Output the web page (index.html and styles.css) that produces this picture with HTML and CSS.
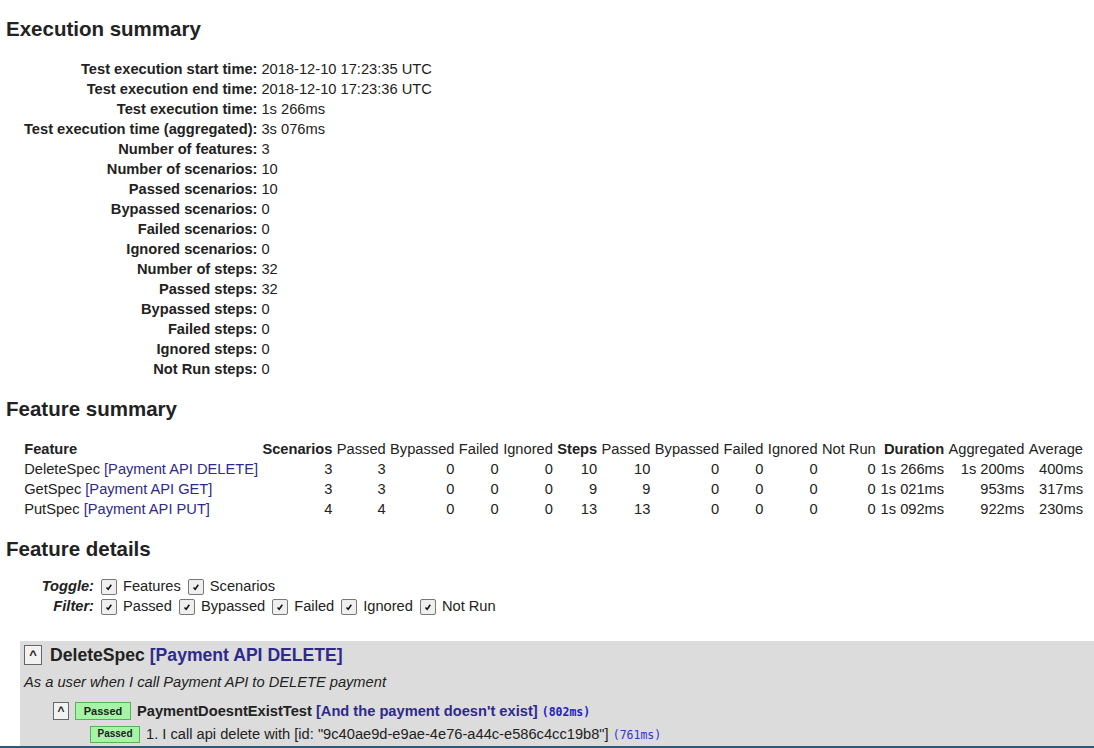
FILE: index.html
```html
<!DOCTYPE html>
<html>
<head>
<meta charset="utf-8">
<link rel="stylesheet" href="styles.css">
</head>
<body>
<h2 class="h">Execution summary</h2>
<table class="summary">
<tr><th>Test execution start time:</th><td>2018-12-10 17:23:35 UTC</td></tr>
<tr><th>Test execution end time:</th><td>2018-12-10 17:23:36 UTC</td></tr>
<tr><th>Test execution time:</th><td>1s 266ms</td></tr>
<tr><th>Test execution time (aggregated):</th><td>3s 076ms</td></tr>
<tr><th>Number of features:</th><td>3</td></tr>
<tr><th>Number of scenarios:</th><td>10</td></tr>
<tr><th>Passed scenarios:</th><td>10</td></tr>
<tr><th>Bypassed scenarios:</th><td>0</td></tr>
<tr><th>Failed scenarios:</th><td>0</td></tr>
<tr><th>Ignored scenarios:</th><td>0</td></tr>
<tr><th>Number of steps:</th><td>32</td></tr>
<tr><th>Passed steps:</th><td>32</td></tr>
<tr><th>Bypassed steps:</th><td>0</td></tr>
<tr><th>Failed steps:</th><td>0</td></tr>
<tr><th>Ignored steps:</th><td>0</td></tr>
<tr><th>Not Run steps:</th><td>0</td></tr>
</table>

<h2 class="h h-gap">Feature summary</h2>
<table class="features">
<thead>
<tr>
<th class="l b">Feature</th>
<th class="b">Scenarios</th><th>Passed</th><th>Bypassed</th><th>Failed</th><th>Ignored</th>
<th class="b">Steps</th><th>Passed</th><th>Bypassed</th><th>Failed</th><th>Ignored</th><th>Not Run</th>
<th class="b dur-col">Duration</th><th>Aggregated</th><th>Average</th>
</tr>
</thead>
<tbody>
<tr><td class="l">DeleteSpec <a class="lnk">[Payment API DELETE]</a></td><td>3</td><td>3</td><td>0</td><td>0</td><td>0</td><td>10</td><td>10</td><td>0</td><td>0</td><td>0</td><td>0</td><td>1s 266ms</td><td>1s 200ms</td><td>400ms</td></tr>
<tr><td class="l">GetSpec <a class="lnk">[Payment API GET]</a></td><td>3</td><td>3</td><td>0</td><td>0</td><td>0</td><td>9</td><td>9</td><td>0</td><td>0</td><td>0</td><td>0</td><td>1s 021ms</td><td>953ms</td><td>317ms</td></tr>
<tr><td class="l">PutSpec <a class="lnk">[Payment API PUT]</a></td><td>4</td><td>4</td><td>0</td><td>0</td><td>0</td><td>13</td><td>13</td><td>0</td><td>0</td><td>0</td><td>0</td><td>1s 092ms</td><td>922ms</td><td>230ms</td></tr>
</tbody>
</table>

<h2 class="h h-gap2">Feature details</h2>
<div class="opts">
  <span class="opt-label">Toggle:</span>
  <div class="opt-list">
    <span class="cb"><svg viewBox="0 0 14 14" width="14" height="14"><path d="M4.5 7.5 L6.2 9.3 L9.3 4.8" fill="none" stroke="#111" stroke-width="1.5"/></svg></span><span class="opt-text">Features</span>
    <span class="cb"><svg viewBox="0 0 14 14" width="14" height="14"><path d="M4.5 7.5 L6.2 9.3 L9.3 4.8" fill="none" stroke="#111" stroke-width="1.5"/></svg></span><span class="opt-text">Scenarios</span>
  </div>
  <span class="opt-label">Filter:</span>
  <div class="opt-list">
    <span class="cb"><svg viewBox="0 0 14 14" width="14" height="14"><path d="M4.5 7.5 L6.2 9.3 L9.3 4.8" fill="none" stroke="#111" stroke-width="1.5"/></svg></span><span class="opt-text">Passed</span>
    <span class="cb"><svg viewBox="0 0 14 14" width="14" height="14"><path d="M4.5 7.5 L6.2 9.3 L9.3 4.8" fill="none" stroke="#111" stroke-width="1.5"/></svg></span><span class="opt-text">Bypassed</span>
    <span class="cb"><svg viewBox="0 0 14 14" width="14" height="14"><path d="M4.5 7.5 L6.2 9.3 L9.3 4.8" fill="none" stroke="#111" stroke-width="1.5"/></svg></span><span class="opt-text">Failed</span>
    <span class="cb"><svg viewBox="0 0 14 14" width="14" height="14"><path d="M4.5 7.5 L6.2 9.3 L9.3 4.8" fill="none" stroke="#111" stroke-width="1.5"/></svg></span><span class="opt-text">Ignored</span>
    <span class="cb"><svg viewBox="0 0 14 14" width="14" height="14"><path d="M4.5 7.5 L6.2 9.3 L9.3 4.8" fill="none" stroke="#111" stroke-width="1.5"/></svg></span><span class="opt-text">Not Run</span>
  </div>
</div>

<div class="feature">
  <div class="feature-head">
    <span class="tgl">^</span>
    <span class="feature-name">DeleteSpec <span class="lnk">[Payment API DELETE]</span></span>
  </div>
  <div class="feature-desc">As a user when I call Payment API to DELETE payment</div>
  <div class="scenario">
    <div class="scenario-head">
      <span class="tgl tgl-sm">^</span>
      <span class="badge">Passed</span>
      <span class="scenario-name">PaymentDoesntExistTest <span class="lnk">[And the payment doesn't exist]</span> <span class="dur dur-b">(802ms)</span></span>
    </div>
    <div class="step">
      <span class="badge badge-sm">Passed</span>
      <span class="step-text">1. I call api delete with [id: "9c40ae9d-e9ae-4e76-a44c-e586c4cc19b8"] <span class="dur">(761ms)</span></span>
    </div>
    <div class="step step-cut">
      <span class="badge badge-sm badge-cut"></span>
    </div>
  </div>
</div>
<div class="bottom-bar"></div>
</body>
</html>
```

FILE: styles.css
```css
html, body {
  margin: 0;
  padding: 0;
}
body {
  padding: 0 0 0 6px;
  font-family: "Liberation Sans", Arial, sans-serif;
  font-size: 11pt;
  line-height: 20px;
  color: #222;
  background: #fff;
}
.h {
  font-size: 20.5px;
  line-height: 24px;
  font-weight: bold;
  margin: 17px 0 18px 0;
  color: #222;
}
.h-gap {
  margin: 18px 0 18px 0;
}
.h-gap2 {
  margin: 18px 0 15px 0;
}
table {
  border-collapse: separate;
  border-spacing: 0;
  margin-left: 16px;
}
th, td {
  padding: 0 2px;
  line-height: 20px;
  font-size: 11pt;
  white-space: nowrap;
}
.features th, .features td {
  padding: 0 2.2px;
}
.features th.dur-col {
  padding-left: 6px;
}
.summary th {
  text-align: right;
  font-weight: bold;
}
.summary td {
  text-align: left;
}
.features th {
  font-weight: normal;
  text-align: right;
}
.features th.b {
  font-weight: bold;
}
.features td {
  text-align: right;
}
.features .l {
  text-align: left;
}
.lnk {
  color: #2e2a8c;
}
.opts {
  display: grid;
  grid-template-columns: 88px auto;
  justify-content: start;
}
.opt-label {
  text-align: right;
  font-weight: bold;
  font-style: italic;
  line-height: 20px;
}
.opt-list {
  display: flex;
  align-items: center;
  height: 20px;
}
.cb {
  width: 14px;
  height: 14px;
  border: 1px solid #777;
  border-radius: 2px;
  background: #efefef;
  display: inline-flex;
  align-items: center;
  justify-content: center;
  margin-left: 7px;
  margin-right: 6px;
  position: relative;
  top: 1px;
}
.cb svg {
  width: 14px;
  height: 14px;
}
.feature {
  margin-top: 25px;
  margin-left: 14px;
  background: #dcdcdc;
  padding: 4px 0 0 4px;
  min-height: 200px;
}
.feature-head {
  display: flex;
  align-items: center;
  height: 20px;
}
.tgl {
  display: inline-flex;
  align-items: center;
  justify-content: center;
  box-sizing: border-box;
  width: 18px;
  height: 20px;
  border: 1px solid #666;
  background: #f2f2f2;
  font-size: 13px;
  font-weight: bold;
  color: #222;
}
.feature-name {
  font-size: 1.2em;
  font-weight: bold;
  margin-left: 8px;
  line-height: 20px;
}
.feature-desc {
  font-style: italic;
  margin-top: 7px;
  line-height: 20px;
}
.scenario {
  margin-top: 9px;
  margin-left: 29px;
}
.scenario-head {
  display: flex;
  align-items: center;
  height: 20px;
}
.tgl-sm {
  width: 16px;
  height: 18px;
  font-size: 12px;
}
.badge {
  display: inline-flex;
  align-items: center;
  justify-content: center;
  box-sizing: border-box;
  width: 56px;
  height: 18px;
  margin-left: 6px;
  background: #a6f5a6;
  border: 1px solid #58b058;
  font-size: 11px;
  font-weight: bold;
  color: #222;
}
.scenario-name {
  margin-left: 6px;
  font-weight: bold;
}
.dur {
  font-family: "DejaVu Sans Mono", "Liberation Mono", monospace;
  font-size: 11.5px;
  color: #3333cc;
  font-weight: normal;
}
.dur-b {
  font-weight: bold;
  color: #2222bb;
}
.step {
  display: flex;
  align-items: center;
  height: 18px;
  margin-top: 4px;
  margin-left: 37px;
}
.step-cut {
  margin-top: 4px;
}
.badge-sm {
  width: 50px;
  height: 17px;
  margin-left: 0;
  font-size: 10px;
}
.badge-cut {
  background: #a0a0a0;
  border-color: #888;
}
.step-text {
  margin-left: 6px;
}
.bottom-bar {
  position: fixed;
  left: 0;
  right: 0;
  bottom: 0;
  height: 2px;
  background: #2a5b7e;
}
```
